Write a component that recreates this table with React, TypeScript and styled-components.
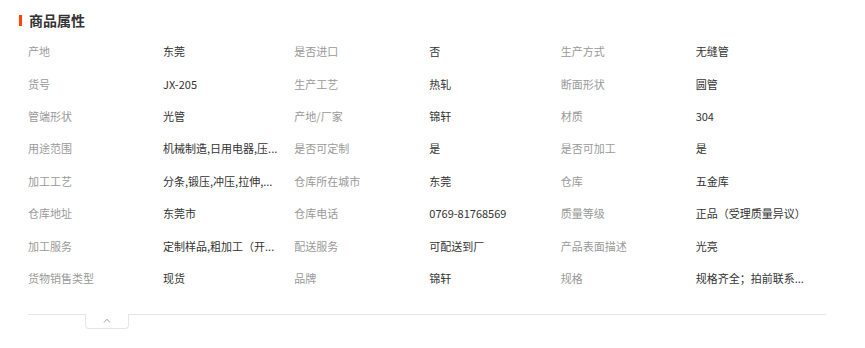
import styled, { createGlobalStyle } from 'styled-components'

const GlobalStyle = createGlobalStyle`
	html, body {
		margin: 0;
		padding: 0;
		background: #fff;
	}
	body {
		font-family: 'Noto Sans CJK SC', 'Noto Sans', sans-serif;
	}
`

// values are shown already shortened, as on the product page
const attributes: [string, string][] = [
	['产地', '东莞'],
	['是否进口', '否'],
	['生产方式', '无缝管'],
	['货号', 'JX-205'],
	['生产工艺', '热轧'],
	['断面形状', '圆管'],
	['管端形状', '光管'],
	['产地/厂家', '锦轩'],
	['材质', '304'],
	['用途范围', '机械制造,日用电器,压...'],
	['是否可定制', '是'],
	['是否可加工', '是'],
	['加工工艺', '分条,锻压,冲压,拉伸,...'],
	['仓库所在城市', '东莞'],
	['仓库', '五金库'],
	['仓库地址', '东莞市'],
	['仓库电话', '0769-81768569'],
	['质量等级', '正品（受理质量异议）'],
	['加工服务', '定制样品,粗加工（开...'],
	['配送服务', '可配送到厂'],
	['产品表面描述', '光亮'],
	['货物销售类型', '现货'],
	['品牌', '锦轩'],
	['规格', '规格齐全；拍前联系...'],
]

const App = () => {
	return (
		<>
			<GlobalStyle />
			<Section>
				<Title>商品属性</Title>
				<AttrGrid>
					{attributes.map(([label, value]) => (
						<Cell key={label}>
							<Label>{label}</Label>
							<Value>{value}</Value>
						</Cell>
					))}
				</AttrGrid>
				<Footer>
					<Toggle>
						<svg width='8' height='5' viewBox='0 0 8 5' fill='none'>
							<path d='M1 4.5L4 1.2L7 4.5' stroke='#9aa0a8' strokeWidth='1' />
						</svg>
					</Toggle>
				</Footer>
			</Section>
		</>
	)
}

export default App

const Section = styled.div`
	padding: 10px 39px 0 28px;
	width: 798px;
`

const Title = styled.h3`
	position: relative;
	margin: 0 0 0 1px;
	font-size: 14px;
	line-height: 20px;
	font-weight: 700;
	color: #333;

	&::before {
		content: '';
		position: absolute;
		left: -10px;
		top: 5px;
		width: 3px;
		height: 11px;
		background: #ff4400;
	}
`

const AttrGrid = styled.div`
	display: grid;
	grid-template-columns: repeat(3, 266.33px);
	grid-auto-rows: 32.4px;
	margin-top: 5px;
`

const Cell = styled.div`
	display: flex;
	align-items: center;
	font-size: 11px;
	line-height: 16px;
`

const Label = styled.span`
	width: 135px;
	flex-shrink: 0;
	color: #999;
`

const Value = styled.span`
	color: #333;
	white-space: nowrap;
`

const Footer = styled.div`
	margin-top: 20px;
	border-top: 1px solid #e6e6e6;
	width: 798px;
`

const Toggle = styled.div`
	display: flex;
	align-items: center;
	justify-content: center;
	margin: -1px 0 0 57px;
	width: 44px;
	height: 15px;
	padding-bottom: 2px;
	box-sizing: border-box;
	background: #fff;
	border: 1px solid #e6e6e6;
	border-top: none;
	border-radius: 0 0 4px 4px;
	cursor: pointer;
`
